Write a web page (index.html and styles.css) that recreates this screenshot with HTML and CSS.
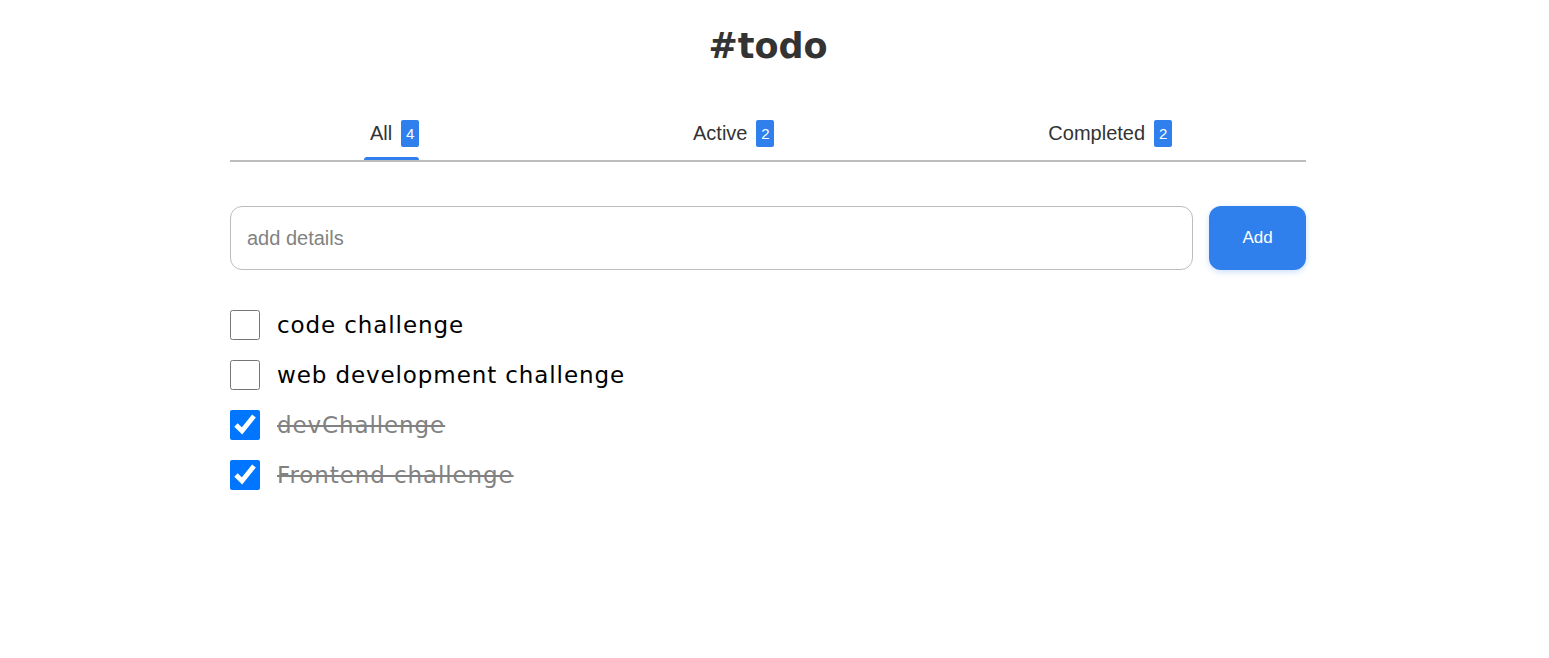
FILE: index.html
```html
<!DOCTYPE html>
<html lang="en">
<head>
<meta charset="utf-8">
<title>#todo</title>
<link rel="stylesheet" href="styles.css">
</head>
<body>
<div class="page">
  <h1 class="title">#todo</h1>
  <nav class="tabs">
    <div class="tab tab-active">All<span class="badge">4</span></div>
    <div class="tab">Active<span class="badge">2</span></div>
    <div class="tab">Completed<span class="badge">2</span></div>
  </nav>
  <form class="add-row" onsubmit="return false">
    <input class="add-input" type="text" placeholder="add details">
    <button class="add-btn" type="button">Add</button>
  </form>
  <ul class="list">
    <li class="item"><input class="check" type="checkbox"><span class="label">code challenge</span></li>
    <li class="item"><input class="check" type="checkbox"><span class="label">web development challenge</span></li>
    <li class="item done"><input class="check" type="checkbox" checked><span class="label">devChallenge</span></li>
    <li class="item done"><input class="check" type="checkbox" checked><span class="label">Frontend challenge</span></li>
  </ul>
</div>
</body>
</html>
```
FILE: styles.css
```css
html, body {
  margin: 0;
  padding: 0;
  background: #ffffff;
}
.page {
  width: 1076px;
  margin: 0 0 0 230px;
  padding-top: 22px;
  font-family: "Liberation Sans", Arial, sans-serif;
}
.title {
  margin: 0;
  text-align: center;
  font-family: "DejaVu Sans", sans-serif;
  font-weight: 700;
  font-size: 35px;
  line-height: 48px;
  color: #333333;
}
.tabs {
  margin-top: 48px;
  display: flex;
  justify-content: space-around;
  border-bottom: 2px solid #bdbdbd;
}
.tab {
  position: relative;
  font-size: 20px;
  line-height: 30px;
  color: #333333;
  padding: 0 0 12px 6px;
}
.tab-active::after {
  content: "";
  position: absolute;
  left: 0;
  right: 0;
  bottom: 0;
  height: 3px;
  border-radius: 4px 4px 0 0;
  background: #2f80ed;
}
.badge {
  display: inline-block;
  margin-left: 9px;
  width: 18px;
  height: 27px;
  box-sizing: border-box;
  padding-top: 5px;
  background: #2f80ed;
  color: #ffffff;
  font-size: 15px;
  line-height: 17px;
  text-align: center;
  border-radius: 2px;
  vertical-align: 1px;
}
.add-row {
  margin: 44px 0 0;
  display: flex;
  gap: 16px;
}
.add-input {
  flex: 1;
  height: 64px;
  box-sizing: border-box;
  border: 1px solid #bdbdbd;
  border-radius: 12px;
  padding: 0 16px;
  font-family: "Liberation Sans", Arial, sans-serif;
  font-size: 20px;
  color: #333333;
  outline: none;
}
.add-input::placeholder {
  color: #828282;
}
.add-btn {
  width: 97px;
  height: 64px;
  border: none;
  border-radius: 12px;
  background: #2f80ed;
  color: #ffffff;
  font-family: "Liberation Sans", Arial, sans-serif;
  font-size: 17px;
  box-shadow: 0 2px 6px rgba(127, 177, 243, 0.4);
}
.list {
  list-style: none;
  margin: 40px 0 0;
  padding: 0;
  display: flex;
  flex-direction: column;
  gap: 20px;
}
.item {
  display: flex;
  align-items: center;
  gap: 17px;
  height: 30px;
}
.check {
  margin: 0;
  width: 30px;
  height: 30px;
  flex: none;
}
.label {
  font-family: "DejaVu Sans", sans-serif;
  font-size: 23px;
  letter-spacing: 0.9px;
  color: #000000;
}
.done .label {
  color: #828282;
  text-decoration: line-through;
}
```
